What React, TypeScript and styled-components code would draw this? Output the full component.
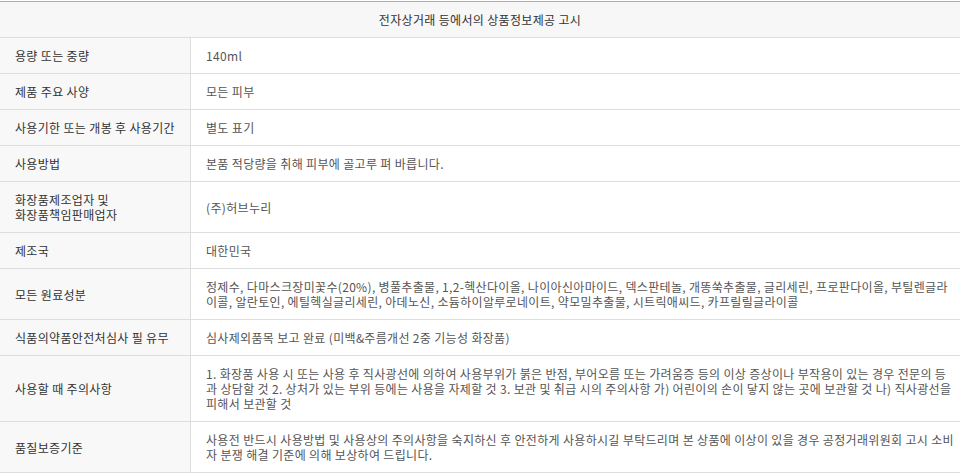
import styled, { createGlobalStyle } from "styled-components";

const GlobalStyle = createGlobalStyle`
    html, body {
        margin: 0;
        padding: 0;
        background: #ffffff;
    }
    body {
        font-family: "Noto Sans CJK KR", "Noto Sans", sans-serif;
        font-size: 12px;
        letter-spacing: 0.33px;
        color: #333333;
    }
`;

const rows: { label: string; value: string }[] = [
    { label: "용량 또는 중량", value: "140ml" },
    { label: "제품 주요 사양", value: "모든 피부" },
    { label: "사용기한 또는 개봉 후 사용기간", value: "별도 표기" },
    { label: "사용방법", value: "본품 적당량을 취해 피부에 골고루 펴 바릅니다." },
    { label: "화장품제조업자 및\n화장품책임판매업자", value: "(주)허브누리" },
    { label: "제조국", value: "대한민국" },
    {
        label: "모든 원료성분",
        value:
            "정제수, 다마스크장미꽃수(20%), 병풀추출물, 1,2-헥산다이올, 나이아신아마이드, 덱스판테놀, 개똥쑥추출물, 글리세린, 프로판다이올, 부틸렌글라이콜, 알란토인, 에틸헥실글리세린, 아데노신, 소듐하이알루로네이트, 약모밀추출물, 시트릭애씨드, 카프릴릴글라이콜",
    },
    { label: "식품의약품안전처심사 필 유무", value: "심사제외품목 보고 완료 (미백&주름개선 2중 기능성 화장품)" },
    {
        label: "사용할 때 주의사항",
        value:
            "1. 화장품 사용 시 또는 사용 후 직사광선에 의하여 사용부위가 붉은 반점, 부어오름 또는 가려움증 등의 이상 증상이나 부작용이 있는 경우 전문의 등과 상담할 것 2. 상처가 있는 부위 등에는 사용을 자제할 것 3. 보관 및 취급 시의 주의사항 가) 어린이의 손이 닿지 않는 곳에 보관할 것 나) 직사광선을 피해서 보관할 것",
    },
    {
        label: "품질보증기준",
        value:
            "사용전 반드시 사용방법 및 사용상의 주의사항을 숙지하신 후 안전하게 사용하시길 부탁드리며 본 상품에 이상이 있을 경우 공정거래위원회 고시 소비자 분쟁 해결 기준에 의해 보상하여 드립니다.",
    },
];

export default function App() {
    return (
        <>
            <GlobalStyle />
            <NoticeTable>
                <Caption>전자상거래 등에서의 상품정보제공 고시</Caption>
                {rows.map((row) => (
                    <Row key={row.label}>
                        <Label>{row.label}</Label>
                        <Value>{row.value}</Value>
                    </Row>
                ))}
            </NoticeTable>
        </>
    );
}

const NoticeTable = styled.div`
    margin-top: 1px;
    border-top: 1px solid #acacac;
    display: flex;
    flex-direction: column;
`;

const Caption = styled.div`
    padding: 10px 15px;
    line-height: 15px;
    text-align: center;
    background: #f7f7f7;
    color: #333333;
    border-bottom: 1px solid #dddddd;
`;

const Row = styled.div`
    display: grid;
    grid-template-columns: 191px 1fr;
    border-bottom: 1px solid #dddddd;
`;

const Label = styled.div`
    display: flex;
    align-items: center;
    white-space: pre-line;
    padding: 10px 6px 10px 15px;
    line-height: 15px;
    background: #f8f8f8;
    color: #333333;
    border-right: 1px solid #dddddd;
`;

const Value = styled.div`
    padding: 10px 4px 10px 15px;
    line-height: 15px;
    color: #555555;
    display: flex;
    align-items: center;
`;
